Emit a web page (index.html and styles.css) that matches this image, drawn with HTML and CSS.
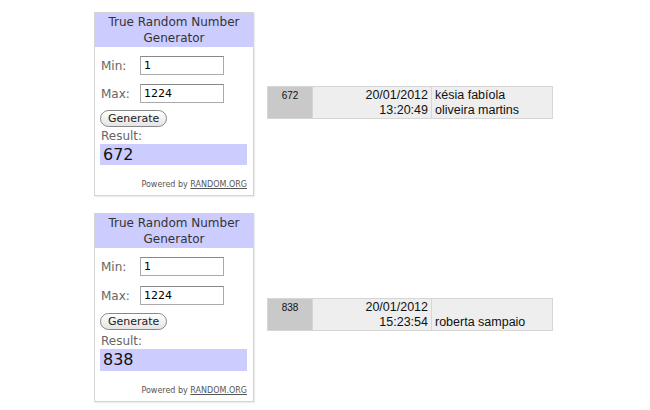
FILE: index.html
```html
<!DOCTYPE html>
<html lang="pt">
<head>
  <meta charset="UTF-8" />
  <title>Sorteio</title>
  <link rel="stylesheet" href="styles.css">
</head>
<body>
  <div class="row">
    <div class="rng">
      <div class="rng-head">True Random Number Generator</div>
      <div class="rng-body">
        <div class="field"><span>Min:</span><input type="text" value="1" /></div>
        <div class="field"><span>Max:</span><input type="text" value="1224" /></div>
        <button type="button">Generate</button>
        <div class="result-label">Result:</div>
        <div class="result">672</div>
        <div class="powered">Powered by <u>RANDOM.ORG</u></div>
      </div>
    </div>
    <table class="sheet first">
      <tr>
        <td class="num">672</td>
        <td class="date">20/01/2012<br />13:20:49</td>
        <td class="name">késia fabíola<br />oliveira martins</td>
      </tr>
    </table>
  </div>

  <div class="row">
    <div class="rng tall">
      <div class="rng-head">True Random Number Generator</div>
      <div class="rng-body">
        <div class="field"><span>Min:</span><input type="text" value="1" /></div>
        <div class="field"><span>Max:</span><input type="text" value="1224" /></div>
        <button type="button">Generate</button>
        <div class="result-label">Result:</div>
        <div class="result">838</div>
        <div class="powered">Powered by <u>RANDOM.ORG</u></div>
      </div>
    </div>
    <table class="sheet second">
      <tr>
        <td class="num">838</td>
        <td class="date">20/01/2012<br />15:23:54</td>
        <td class="name bottom">roberta sampaio</td>
      </tr>
    </table>
  </div>
</body>
</html>
```

FILE: styles.css
```css
body {
  margin: 0;
  background: #fff;
  padding: 12px 0 0 94px;
  font-family: "DejaVu Sans", Verdana, sans-serif;
}
.row {
  display: flex;
  align-items: flex-start;
  gap: 13px;
  margin-bottom: 17px;
}
.rng {
  width: 158px;
  border: 1px solid #d4d4d4;
  box-shadow: 1px 1px 1px #eee;
}
.rng-head {
  background: #ccccff;
  color: #333;
  text-align: center;
  font-size: 12px;
  line-height: 16px;
  padding: 1px 6px 1px;
}
.rng-body {
  padding: 9px 5px 6px 6px;
}
.field {
  display: flex;
  align-items: center;
  margin-bottom: 9px;
  font-size: 12px;
  color: #666;
}
.field span {
  width: 39px;
}
.field input {
  width: 76px;
  height: 15px;
  padding: 1px 3px;
  border: 1px solid #aaa;
  border-top-color: #888;
  font-family: "DejaVu Sans", sans-serif;
  font-size: 11px;
  color: #000;
}
button {
  display: block;
  font-family: "DejaVu Sans", sans-serif;
  font-size: 11px;
  color: #222;
  background: linear-gradient(#fff, #e4e4e4);
  border: 1px solid #888;
  border-radius: 9px;
  padding: 0 7px;
  height: 17px;
  margin: -2px 0 0 -1px;
}
.result-label {
  font-size: 12px;
  color: #666;
  margin-top: 2px;
  line-height: 15px;
}
.result {
  background: #ccccff;
  color: #111;
  font-size: 16px;
  line-height: 21px;
  padding: 0 3px;
  margin-right: 1px;
  margin-left: -1px;
}
.powered {
  text-align: right;
  font-size: 8px;
  color: #555;
  margin-top: 15px;
  padding-right: 1px;
}
/* second widget sits a touch looser in the screenshot */
.tall .field { margin-bottom: 10px; }
.tall .result-label { margin-top: 4px; }
.tall .result { line-height: 22px; }
.sheet {
  border-collapse: collapse;
  font-family: "Liberation Sans", Arial, sans-serif;
  font-size: 12.5px;
  line-height: 15px;
  color: #111;
}
.sheet.first { margin-top: 74px; }
.sheet.second { margin-top: 85px; }
.sheet td {
  border: 1px solid #d6d6d6;
  background: #eeeeee;
  vertical-align: top;
  padding: 1px 3px 0;
}
.sheet .num {
  background: #c9c9c9;
  width: 38px;
  font-size: 10px;
  text-align: center;
  padding-top: 1px;
}
.sheet .date {
  width: 112px;
  text-align: right;
}
.sheet .name {
  width: 114px;
}
.sheet .bottom {
  vertical-align: bottom;
}
```
